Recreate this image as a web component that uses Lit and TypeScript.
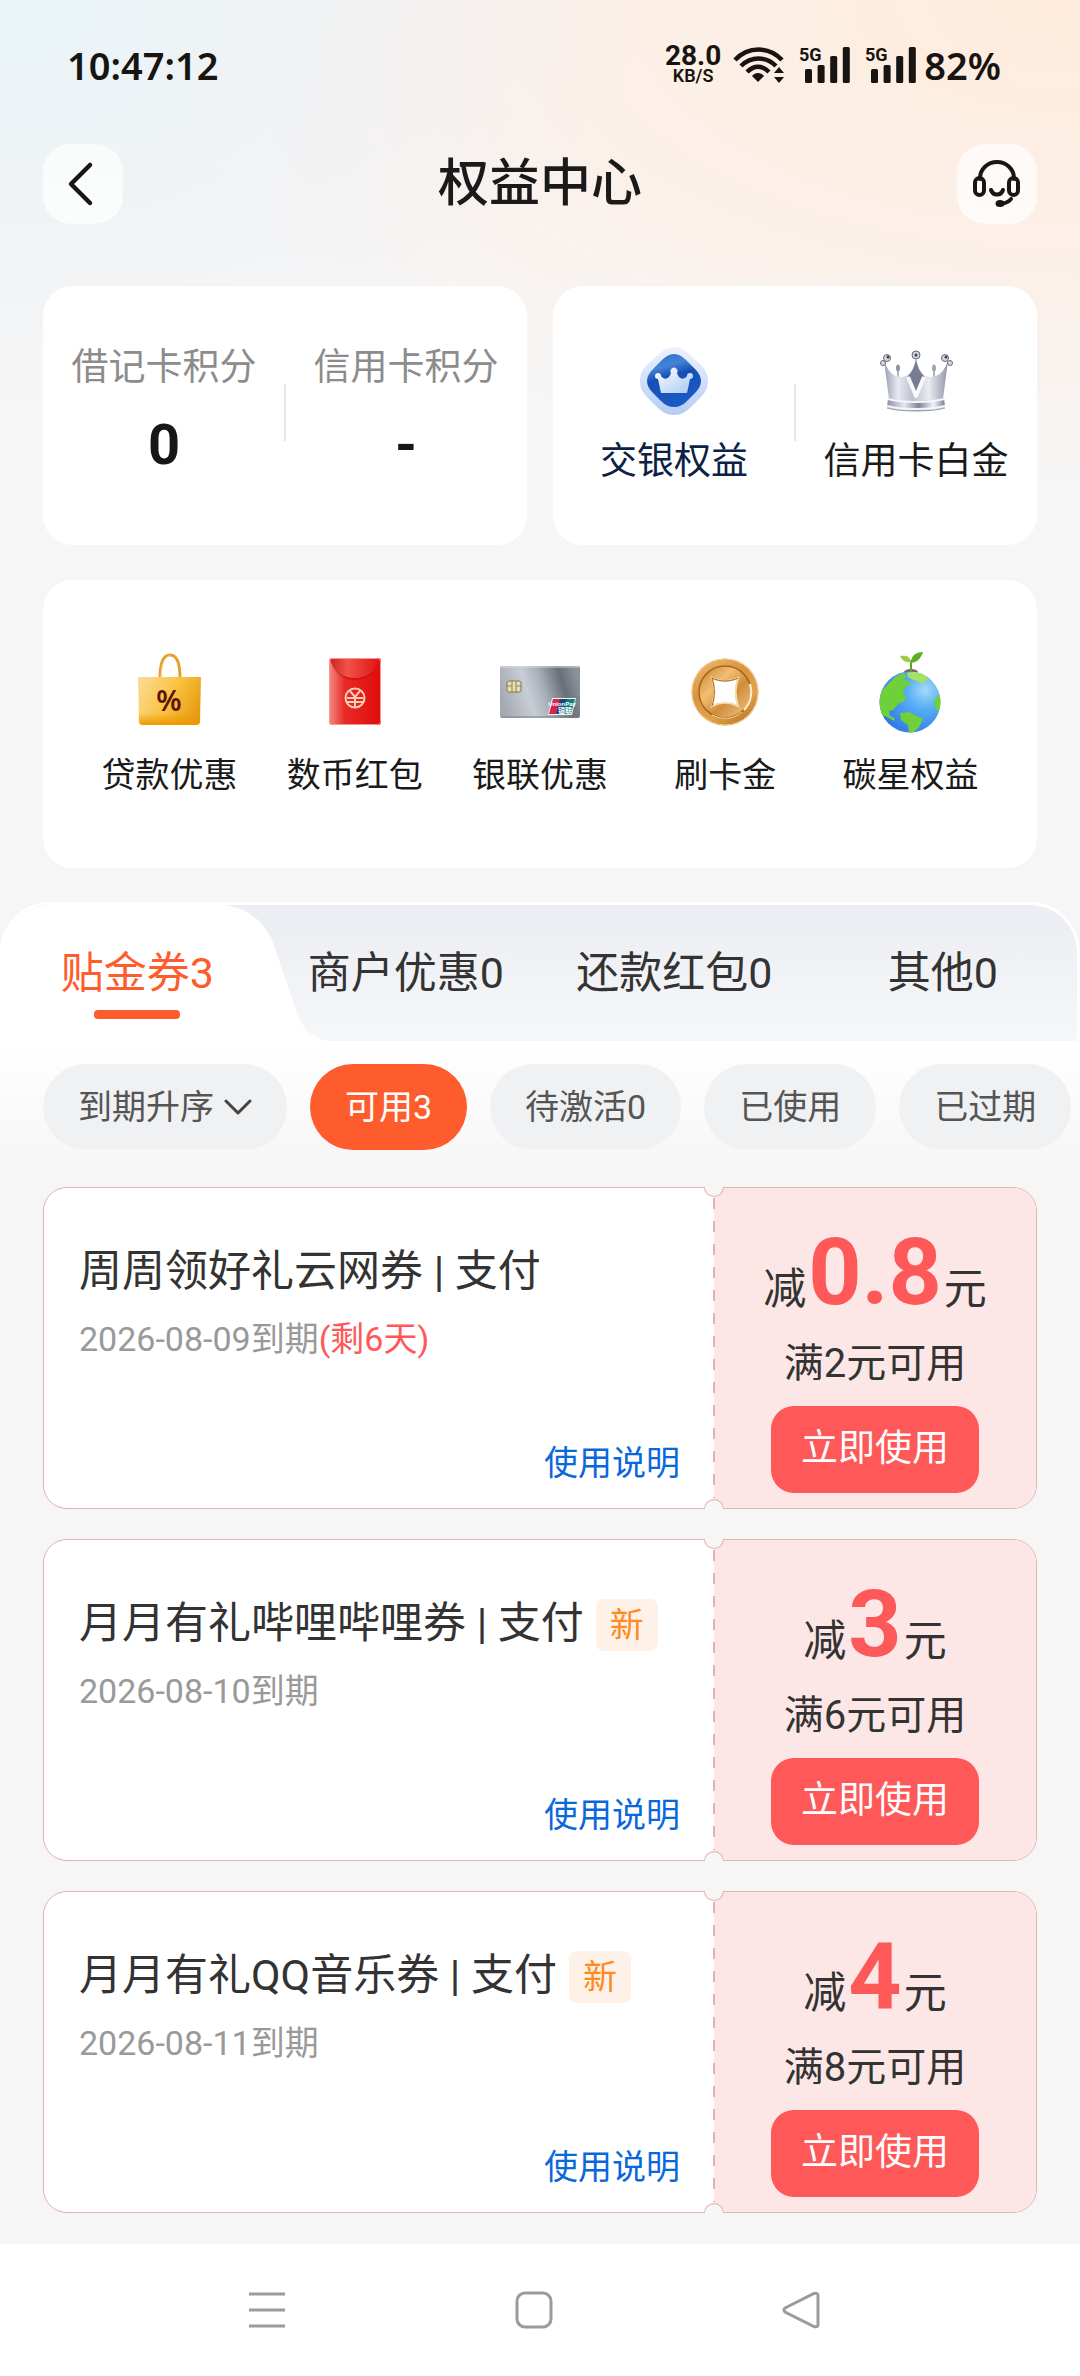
import { LitElement, html, css, svg, nothing } from "lit";
import { customElement, property, state } from "lit/decorators.js";
import { classMap } from "lit/directives/class-map.js";

interface Coupon {
  title: string;
  expires: string;
  remaining?: string;
  isNew?: boolean;
  amount: string;
  threshold: string;
}

const TABS = [
  { name: "贴金券", count: 3 },
  { name: "商户优惠", count: 0 },
  { name: "还款红包", count: 0 },
  { name: "其他", count: 0 },
];

const FILTERS = ["可用3", "待激活0", "已使用", "已过期"];

const COUPONS: Coupon[] = [
  {
    title: "周周领好礼云网券 | 支付",
    expires: "2026-08-09到期",
    remaining: "(剩6天)",
    amount: "0.8",
    threshold: "满2元可用",
  },
  {
    title: "月月有礼哔哩哔哩券 | 支付",
    expires: "2026-08-10到期",
    isNew: true,
    amount: "3",
    threshold: "满6元可用",
  },
  {
    title: "月月有礼QQ音乐券 | 支付",
    expires: "2026-08-11到期",
    isNew: true,
    amount: "4",
    threshold: "满8元可用",
  },
];

const bankIcon = html`
  <svg class="icon" viewBox="0 0 82 82" aria-hidden="true">
    <defs>
      <linearGradient id="bank-rim" x1="0" y1="0" x2="0" y2="1">
        <stop offset="0" stop-color="#edf3fd" />
        <stop offset="1" stop-color="#b4ccf5" />
      </linearGradient>
      <linearGradient id="bank-core" x1="0" y1="0" x2="0.3" y2="1">
        <stop offset="0" stop-color="#2b6cc8" />
        <stop offset="0.3" stop-color="#4683d6" />
        <stop offset="0.5" stop-color="#1550b4" />
        <stop offset="1" stop-color="#1a5ac4" />
      </linearGradient>
      <linearGradient id="bank-crown" x1="0" y1="0" x2="1" y2="1">
        <stop offset="0" stop-color="#ffffff" />
        <stop offset="1" stop-color="#a9c8f2" />
      </linearGradient>
    </defs>
    <path
      d="M41 7c7 0 12 4 17 9l10 9c5 5 7 10 7 16s-2 11-7 16l-10 10c-5 5-10 8-17 8s-12-3-17-8L14 57c-5-5-7-10-7-16s2-11 7-16l10-9c5-5 10-9 17-9z"
      fill="url(#bank-rim)"
    />
    <path
      d="M41 14c5 0 9 3 13 7l8 8c4 4 6 8 6 12s-2 8-6 12l-8 8c-4 4-8 6-13 6s-9-2-13-6l-8-8c-4-4-6-8-6-12s2-8 6-12l8-8c4-4 8-7 13-7z"
      fill="url(#bank-core)"
    />
    <path
      d="M28 53l-3-14a3 3 0 1 1 3-3c3 4 8 4 10-3a3.500 3.500 0 1 1 6 0c2 7 7 7 10 3a3 3 0 1 1 3 3l-3 14z"
      fill="url(#bank-crown)"
    />
  </svg>
`;

const crownIcon = html`
  <svg class="icon" viewBox="0 0 82 82" aria-hidden="true">
    <defs>
      <linearGradient id="silver" x1="0" y1="0" x2="1" y2="0">
        <stop offset="0" stop-color="#9a9eb0" />
        <stop offset="0.22" stop-color="#e8eaf0" />
        <stop offset="0.45" stop-color="#bcc0cd" />
        <stop offset="0.7" stop-color="#eaecf1" />
        <stop offset="1" stop-color="#9296a8" />
      </linearGradient>
      <linearGradient id="silver-band" x1="0" y1="0" x2="1" y2="0">
        <stop offset="0" stop-color="#8c90a6" />
        <stop offset="0.3" stop-color="#e4e6ee" />
        <stop offset="0.55" stop-color="#7f8399" />
        <stop offset="0.8" stop-color="#f2f3f7" />
        <stop offset="1" stop-color="#7c8096" />
      </linearGradient>
    </defs>
    <path d="M23 28v9M59 28v9" stroke="#b3b6c4" stroke-width="2" />
    <ellipse cx="23" cy="28" rx="2" ry="3.500" fill="#8f93a6" />
    <ellipse cx="59" cy="28" rx="2" ry="3.500" fill="#a2a5b5" />
    <path
      d="M9 21c4 10 8 15 17 16 8 0 12-6 15-18 3 12 7 18 15 18 9-1 13-6 17-16l-5 38c-14 5-40 5-54 0z"
      fill="url(#silver)"
    />
    <path d="M41 18c1 9 4 14 8 18l-8 17-8-17c4-4 7-9 8-18z" fill="#777b93" />
    <path
      d="M33 37l8 19 8-19"
      fill="none"
      stroke="#f7f8fb"
      stroke-width="4"
      stroke-linejoin="round"
    />
    <path
      d="M13 58c14 4 42 4 56 0l1 9c-14 5-44 5-58 0z"
      fill="url(#silver-band)"
    />
    <path
      d="M13 59c14 4 42 4 56 0M12 66c14 4 44 4 58 0"
      fill="none"
      stroke="#f5f6fa"
      stroke-width="2"
    />
    <path d="M12 68c14 4 44 4 58 0" fill="none" stroke="#9599ac" stroke-width="1" />
    <g fill="#d3d6e0" stroke="#666a80" stroke-width="1">
      <circle cx="8" cy="23" r="2.500" />
      <circle cx="75" cy="23" r="2.500" />
      <circle cx="41" cy="15" r="4" />
      <circle cx="12" cy="18" r="3.500" />
      <circle cx="70" cy="18" r="3.500" />
    </g>
    <g fill="#3a3e52">
      <circle cx="41" cy="15" r="1.500" />
      <circle cx="13" cy="17" r="1.500" />
      <circle cx="71" cy="17" r="1.500" />
    </g>
  </svg>
`;

const bagIcon = html`
  <svg class="icon" viewBox="0 0 82 82" aria-hidden="true">
    <defs>
      <linearGradient id="bag" x1="0" y1="0.300" x2="1" y2="0.700">
        <stop offset="0" stop-color="#fbd98a" />
        <stop offset="0.5" stop-color="#f9c23f" />
        <stop offset="1" stop-color="#e59a10" />
      </linearGradient>
      <linearGradient id="bag-foot" x1="0" y1="0" x2="0" y2="1">
        <stop offset="0.75" stop-color="#ee9a00" stop-opacity="0" />
        <stop offset="1" stop-color="#ee9a00" />
      </linearGradient>
    </defs>
    <path
      d="M31 27c0-16 4-23 10-23s10 7 10 23"
      fill="none"
      stroke="#e5a02c"
      stroke-width="3"
    />
    <path d="M32 27c0-14 4-22 9-22" fill="none" stroke="#f8d58c" stroke-width="1" />
    <path d="M9 26h63l-1 44a4 4 0 0 1-4 4H14a4 4 0 0 1-4-4z" fill="url(#bag)" />
    <path d="M9 26h63l-1 44a4 4 0 0 1-4 4H14a4 4 0 0 1-4-4z" fill="url(#bag-foot)" />
    <text x="40" y="60" text-anchor="middle" class="percent">%</text>
  </svg>
`;

const packetIcon = html`
  <svg class="icon" viewBox="0 0 82 82" aria-hidden="true">
    <defs>
      <linearGradient id="packet" x1="0" y1="0" x2="1" y2="0">
        <stop offset="0" stop-color="#f58c84" />
        <stop offset="0.3" stop-color="#e82a26" />
        <stop offset="1" stop-color="#e00c0c" />
      </linearGradient>
      <linearGradient id="flap" x1="0" y1="0" x2="1" y2="0">
        <stop offset="0" stop-color="#cc2420" />
        <stop offset="0.35" stop-color="#f0524a" />
        <stop offset="1" stop-color="#e01212" />
      </linearGradient>
    </defs>
    <rect x="15" y="7" width="52" height="67" rx="3" fill="url(#packet)" />
    <path d="M16 8h50c-3 14-13 21-25 21S19 22 16 8z" fill="#a90d0d" opacity="0.4" />
    <path d="M16 8h50c-3 12-13 19-25 19S19 20 16 8z" fill="url(#flap)" />
    <rect x="15.500" y="7.500" width="51" height="66" rx="3" fill="none" stroke="#f49a94" />
    <g fill="none" stroke="#f8cdb4" stroke-width="2">
      <circle cx="41" cy="47" r="9.500" />
      <path d="M36 40l5 6 5-6M41 46v10M33 47h16M33 51h16" />
    </g>
  </svg>
`;

const cardIcon = html`
  <svg class="icon" viewBox="0 0 82 82" aria-hidden="true">
    <defs>
      <linearGradient id="plate" x1="0" y1="0.600" x2="1" y2="0.400">
        <stop offset="0" stop-color="#a4a9b1" />
        <stop offset="0.35" stop-color="#c9ced6" />
        <stop offset="0.55" stop-color="#a9afb8" />
        <stop offset="0.8" stop-color="#686f79" />
        <stop offset="1" stop-color="#8b9199" />
      </linearGradient>
    </defs>
    <rect x="1" y="15" width="80" height="52" rx="2" fill="url(#plate)" />
    <path d="M2 16h78" stroke="#d5d9de" />
    <path d="M2 66h78" stroke="#7b818a" />
    <rect x="8" y="30" width="14" height="11" rx="2" fill="#e9dfae" stroke="#7d755a" />
    <path d="M13 30v11M17 30v11M8 35h5M17 35h5" stroke="#8a8265" fill="none" />
    <path d="M53 47h24l-4 17H49z" fill="#f1f3f5" />
    <path d="M54 48h8l-4 15h-8z" fill="#d7264c" />
    <path d="M61 48h8l-4 15h-8z" fill="#16467c" />
    <path d="M68 48h8l-4 15h-8z" fill="#0c7f80" />
    <text x="63" y="55" text-anchor="middle" class="union">UnionPay</text>
    <text x="66" y="62" text-anchor="middle" class="union union-cn">银联</text>
  </svg>
`;

const coinIcon = html`
  <svg class="icon" viewBox="0 0 82 82" aria-hidden="true">
    <defs>
      <linearGradient id="coin" x1="0.200" y1="0" x2="0.800" y2="1">
        <stop offset="0" stop-color="#eeb76a" />
        <stop offset="0.35" stop-color="#d9943f" />
        <stop offset="0.7" stop-color="#e2a24c" />
        <stop offset="1" stop-color="#b87524" />
      </linearGradient>
      <linearGradient id="coin-face" x1="0" y1="0" x2="1" y2="1">
        <stop offset="0" stop-color="#c47f30" />
        <stop offset="0.35" stop-color="#f3bd72" />
        <stop offset="0.6" stop-color="#d18d3e" />
        <stop offset="1" stop-color="#f5c981" />
      </linearGradient>
    </defs>
    <circle cx="41" cy="41" r="33.500" fill="url(#coin)" />
    <circle cx="41" cy="41" r="33" fill="none" stroke="#f4cf93" stroke-width="1" />
    <circle cx="41" cy="41" r="26" fill="url(#coin-face)" stroke="#a8661c" stroke-width="1.500" />
    <path d="M60 59a26 26 0 0 0 6-26" fill="none" stroke="#fff0d0" stroke-width="2" />
    <path d="M28 64a26 26 0 0 0 30-3" fill="none" stroke="#fbe0b0" stroke-width="1" />
    <path
      d="M28 27c8 4 18 4 26 0-3 9-3 19 0 28-8-4-18-4-26 0 3-9 3-19 0-28z"
      fill="#ffffff"
      stroke="#f7dcaa"
      stroke-width="2"
    />
    <path d="M28 27c8 4 18 4 26 0M28 27c3 9 3 19 0 28" fill="none" stroke="#a8661c" />
  </svg>
`;

const globeIcon = html`
  <svg class="icon" viewBox="0 0 82 82" aria-hidden="true">
    <defs>
      <radialGradient id="sea" cx="0.750" cy="0.300" r="0.900">
        <stop offset="0" stop-color="#a5daf8" />
        <stop offset="0.35" stop-color="#55adf5" />
        <stop offset="1" stop-color="#2a6fe4" />
      </radialGradient>
      <clipPath id="ball"><circle cx="41" cy="51" r="30.500" /></clipPath>
    </defs>
    <ellipse cx="42" cy="21" rx="7" ry="3" fill="#8a5a4c" />
    <circle cx="41" cy="51" r="30.500" fill="url(#sea)" />
    <g clip-path="url(#ball)" fill="#6fd03a">
      <path
        d="M26 26l8-4 4 3-4 4 6 1 2 5-4-1-3 4-1 4 3 4-2 5-5 1-6 7-4 1 1 5 5 2-1 3-7-4-8-3-1-12 4-12z"
      />
      <path d="M38 22l10-2 9 4 2 4-6 5-4-3-5-1-5-3z" fill="#a6e066" />
      <path d="M31 62l9-1 14 7-4 8-7 7-3-1-1-8-7-5z" />
      <path d="M72 43l-6 4-1 7 3 6 6-4z" />
    </g>
    <path d="M42 20V9" stroke="#5fa02c" stroke-width="2" fill="none" />
    <path d="M42 11c-6 1-9-2-11-6 6-1 10 0 11 6z" fill="#9ccc3f" />
    <path d="M42 12c0-7 4-11 12-11-2 6-5 10-12 11z" fill="#5fae28" />
  </svg>
`;

const SERVICES = [
  { label: "贷款优惠", icon: bagIcon },
  { label: "数币红包", icon: packetIcon },
  { label: "银联优惠", icon: cardIcon },
  { label: "刷卡金", icon: coinIcon },
  { label: "碳星权益", icon: globeIcon },
];

@customElement("coupon-card")
export class CouponCard extends LitElement {
  @property({ attribute: false }) coupon!: Coupon;

  static styles = css`
    :host {
      display: block;
    }

    .coupon {
      display: flex;
      position: relative;
      border: 1px solid #e6b0b0;
      border-radius: 24px;
      background: #ffffff;
    }

    .info {
      flex: 1;
      display: flex;
      flex-direction: column;
      padding: 53px 34px 21px 35px;
    }

    .heading {
      display: flex;
      align-items: center;
      gap: 12px;
      height: 60px;
    }

    h2 {
      margin: 0;
      font-size: 43px;
      font-weight: 400;
      line-height: 60px;
      color: #333333;
      white-space: nowrap;
    }

    .tag {
      padding: 2px 14px;
      margin-top: 4px;
      border-radius: 8px;
      background: #fef1e8;
      color: #ff8a1f;
      font-size: 34px;
      line-height: 48px;
    }

    .date {
      margin: 14px 0 0;
      font-size: 34px;
      line-height: 48px;
      color: #999999;
    }

    .remaining {
      color: #fe5858;
    }

    a {
      align-self: flex-end;
      margin-top: 76px;
      font-size: 34px;
      line-height: 48px;
      color: #0a68dc;
      text-decoration: none;
    }

    .offer {
      position: relative;
      flex: 0 0 322px;
      display: flex;
      flex-direction: column;
      align-items: center;
      padding: 38px 0 15px;
      border-radius: 0 23px 23px 0;
      background: #fde6e6;
      color: #333333;
    }

    /* Perforation between the two halves */
    .offer::before {
      content: "";
      position: absolute;
      top: 10px;
      bottom: 10px;
      left: -1px;
      width: 2px;
      background: repeating-linear-gradient(
        to bottom,
        #e6b0b0 0 11px,
        transparent 11px 23px
      );
    }

    .notch {
      position: absolute;
      left: -10px;
      box-sizing: border-box;
      width: 20px;
      height: 10px;
      border: 1px solid #e6b0b0;
      background: #f7f7f7;
    }

    .notch.top {
      top: -1px;
      border-top: none;
      border-radius: 0 0 10px 10px;
    }

    .notch.bottom {
      bottom: -1px;
      border-bottom: none;
      border-radius: 10px 10px 0 0;
    }

    .amount {
      display: flex;
      align-items: baseline;
      gap: 2px;
      font-size: 43px;
      line-height: 60px;
    }

    .amount strong {
      font-size: 93px;
      font-weight: 700;
      line-height: 94px;
      color: #fe5858;
    }

    .threshold {
      margin-top: 16px;
      font-size: 40px;
      line-height: 56px;
    }

    button {
      margin-top: 14px;
      padding: 17px 30px 18px;
      border: none;
      border-radius: 23px;
      background: #fe5858;
      color: #ffffff;
      font-family: inherit;
      font-size: 37px;
      line-height: 52px;
      cursor: pointer;
    }
  `;

  render() {
    const { title, expires, remaining, isNew, amount, threshold } = this.coupon;
    return html`
      <article class="coupon">
        <div class="info">
          <div class="heading">
            <h2>${title}</h2>
            ${isNew ? html`<span class="tag">新</span>` : nothing}
          </div>
          <p class="date">
            ${expires}${remaining
              ? html`<span class="remaining">${remaining}</span>`
              : nothing}
          </p>
          <a href="#usage">使用说明</a>
        </div>
        <div class="offer">
          <span class="notch top"></span>
          <span class="notch bottom"></span>
          <div class="amount">
            <span>减</span><strong>${amount}</strong><span>元</span>
          </div>
          <div class="threshold">${threshold}</div>
          <button type="button">立即使用</button>
        </div>
      </article>
    `;
  }
}

@customElement("app-root")
export class AppRoot extends LitElement {
  @state() private activeTab = 0;
  @state() private activeFilter = 0;

  static styles = css`
    :host {
      display: flex;
      flex-direction: column;
      min-height: 100vh;
      background: #f6f6f6;
      color: #1a1a1a;
      font-family: Roboto, "Noto Sans CJK SC", sans-serif;
    }

    button,
    select {
      border: none;
      background: none;
      padding: 0;
      font-family: inherit;
      color: inherit;
      cursor: pointer;
    }

    a {
      color: inherit;
      text-decoration: none;
    }

    .top {
      background:
        radial-gradient(ellipse 640px 400px at 0 0, #e9f4f7, rgba(236, 240, 245, 0.5) 60%, transparent),
        radial-gradient(ellipse 960px 480px at 100% 0, #ffecdc, rgba(253, 238, 229, 0.7) 60%, transparent);
      padding: 46px 43px 0;
    }

    .status {
      display: flex;
      align-items: center;
      justify-content: space-between;
      height: 38px;
      padding: 0 36px 0 24px;
      font-family: "Noto Sans", sans-serif;
      font-weight: 600;
      font-size: 38px;
      line-height: 38px;
      color: #171412;
    }

    .indicators {
      display: flex;
      align-items: center;
    }

    .speed {
      display: flex;
      flex-direction: column;
      align-items: center;
      margin-right: 12px;
      font-family: Roboto, sans-serif;
      font-size: 28px;
      font-weight: 700;
      line-height: 21px;
    }

    .speed small {
      font-size: 18px;
      font-weight: 600;
      line-height: 19px;
    }

    .wifi {
      width: 52px;
      height: 38px;
      margin-right: 14px;
    }

    .signal {
      width: 52px;
      height: 38px;
      margin-right: 14px;
      overflow: visible;
    }

    .signal:last-of-type {
      margin-right: 7px;
    }

    .signal text {
      font: 700 18px Roboto, sans-serif;
    }

    .header {
      display: flex;
      align-items: center;
      justify-content: space-between;
      margin-top: 60px;
    }

    h1 {
      margin: 0;
      font-size: 51px;
      font-weight: 500;
      line-height: 80px;
    }

    .round {
      width: 80px;
      height: 80px;
      border-radius: 28px;
      background: rgba(255, 255, 255, 0.7);
    }

    .round svg {
      display: block;
      width: 80px;
      height: 80px;
    }

    .summary {
      display: grid;
      grid-template-columns: 1fr 1fr;
      gap: 26px;
      margin-top: 62px;
    }

    .panel {
      display: flex;
      border-radius: 30px;
      background: #ffffff;
    }

    .cell {
      position: relative;
      flex: 1;
      display: flex;
      flex-direction: column;
      align-items: center;
      padding: 54px 0 57px;
      font-size: 37px;
      line-height: 52px;
      white-space: nowrap;
    }

    .cell + .cell::before {
      content: "";
      position: absolute;
      left: -1px;
      top: 98px;
      width: 2px;
      height: 57px;
      background: #e8e8e8;
    }

    .cell .label {
      margin-top: 2px;
      color: #8c8c8c;
    }

    .cell .value {
      margin-top: 16px;
      font-size: 56px;
      font-weight: 700;
      line-height: 70px;
      color: #171717;
    }

    .cell .name {
      margin-top: 14px;
    }

    .cell .name.bank {
      color: #0b2245;
    }

    .icon {
      width: 82px;
      height: 82px;
    }

    .percent {
      font: 600 29px "Noto Sans", sans-serif;
      fill: #5c1408;
    }

    .union {
      font: 700 6px "Liberation Sans", sans-serif;
      fill: #ffffff;
    }

    .union-cn {
      font: 700 7px "Noto Sans CJK SC", sans-serif;
    }

    .services {
      margin: 35px 43px 0;
      padding: 71px 34px 69px;
    }

    .service {
      flex: 1;
      display: flex;
      flex-direction: column;
      align-items: center;
      gap: 18px;
      font-size: 34px;
      line-height: 48px;
      white-space: nowrap;
    }

    .wallet {
      flex: 1;
      margin-top: 34px;
    }

    .tabs {
      display: flex;
      border: 3px solid #ffffff;
      border-bottom: none;
      border-radius: 50px 50px 0 0;
      background: linear-gradient(#eaedf2, #f0f1f4 40%, #f6f7f9) padding-box;
    }

    .tab {
      position: relative;
      flex: 1 1 0;
      display: flex;
      flex-direction: column;
      align-items: center;
      gap: 7px;
      padding: 38px 0 22px;
      font-size: 43px;
      line-height: 60px;
      color: #333333;
      white-space: nowrap;
    }

    .tab::after {
      content: "";
      width: 86px;
      height: 9px;
      border-radius: 4px;
    }

    .tab.active {
      color: #ff5c2e;
    }

    .tab.active::after {
      background: #ff5c2e;
      z-index: 1;
    }

    .tab span {
      position: relative;
      z-index: 1;
    }

    .tab svg {
      position: absolute;
      left: -3px;
      top: 0;
      width: 334px;
      height: 100%;
    }

    .filters {
      display: flex;
      gap: 23px;
      padding: 23px 0 37px 43px;
      background: linear-gradient(#ffffff, #f6f6f6 90%);
      overflow: hidden;
    }

    .pill {
      flex: none;
      display: flex;
      align-items: center;
      height: 86px;
      padding: 0 35px;
      border-radius: 43px;
      background: #f0f1f3;
      color: #555555;
      font-size: 34px;
      line-height: 48px;
      white-space: nowrap;
    }

    .pill.active {
      background: #ff5c2e;
      color: #ffffff;
    }

    .pill select {
      appearance: none;
      font-size: 34px;
      line-height: 48px;
    }

    .pill svg {
      width: 30px;
      height: 30px;
      margin-left: 8px;
      pointer-events: none;
    }

    .coupons {
      display: flex;
      flex-direction: column;
      gap: 30px;
      padding: 0 43px 31px;
    }

    .system {
      display: grid;
      grid-template-columns: repeat(3, 1fr);
      justify-items: center;
      align-items: center;
      height: 132px;
      padding: 0 146px 0 133px;
      background: #ffffff;
    }

    .system button {
      height: 40px;
    }

    .system svg {
      display: block;
      width: 40px;
      height: 40px;
      fill: none;
      stroke: #9b9b9b;
      stroke-width: 3;
    }
  `;

  private selectTab(index: number) {
    this.activeTab = index;
  }

  private selectFilter(index: number) {
    this.activeFilter = index;
  }

  private renderSignal() {
    const tops = [23, 19, 10, 1];
    return html`
      <svg class="signal" viewBox="0 0 52 38" fill="currentColor" aria-hidden="true">
        <text x="0" y="15">5G</text>
        ${tops.map(
          (top, i) => svg`
            <rect x=${6 + i * 12.600} y=${top} width="7" height=${37 - top} rx="1.500" />
          `,
        )}
      </svg>
    `;
  }

  private renderStatus() {
    return html`
      <div class="status">
        <span>10:47:12</span>
        <div class="indicators">
          <span class="speed">28.0<small>KB/S</small></span>
          <svg
            class="wifi"
            viewBox="0 0 52 38"
            fill="none"
            stroke="currentColor"
            stroke-width="4.500"
            aria-hidden="true"
          >
            <path d="M2 14c13-14 34-14 47 0" />
            <path d="M8 20c10-10 25-10 35 0" />
            <path d="M14 26c7-7 15-7 22 0" />
            <path d="M25 36l-6-6c3-4 9-4 12 0z" fill="currentColor" stroke="none" />
            <path
              d="M41 27l5-6 5 6zM41 31l5 6 5-6z"
              fill="currentColor"
              stroke="none"
            />
          </svg>
          ${this.renderSignal()} ${this.renderSignal()}
          <span>82%</span>
        </div>
      </div>
    `;
  }

  private renderHeader() {
    return html`
      <header class="header">
        <button type="button" class="round" aria-label="返回">
          <svg
            viewBox="0 0 80 80"
            fill="none"
            stroke="#171717"
            stroke-width="4.500"
            stroke-linecap="round"
            stroke-linejoin="round"
          >
            <path d="M47 21L28 40l19 19" />
          </svg>
        </button>
        <h1>权益中心</h1>
        <button type="button" class="round" aria-label="客服">
          <svg
            viewBox="0 0 80 80"
            fill="none"
            stroke="#171717"
            stroke-width="4"
            stroke-linecap="round"
          >
            <path d="M23 35v-1a17 16 0 0 1 34 0v1" />
            <rect x="18" y="34" width="9" height="17" rx="4.500" />
            <rect x="52" y="34" width="9" height="17" rx="4.500" />
            <path d="M34 46c2 6 10 6 12 0" />
            <path d="M54 55c-2 3-5 4-9 4.500" />
            <ellipse cx="43" cy="59.500" rx="2.500" ry="1.500" fill="#171717" />
          </svg>
        </button>
      </header>
    `;
  }

  private renderSummary() {
    return html`
      <section class="summary">
        <div class="panel">
          <div class="cell">
            <span class="label">借记卡积分</span>
            <span class="value">0</span>
          </div>
          <div class="cell">
            <span class="label">信用卡积分</span>
            <span class="value">-</span>
          </div>
        </div>
        <div class="panel">
          <a class="cell" href="#bank">${bankIcon}<span class="name bank">交银权益</span></a>
          <a class="cell" href="#platinum">${crownIcon}<span class="name">信用卡白金</span></a>
        </div>
      </section>
    `;
  }

  private renderTabs() {
    return html`
      <div class="tabs" role="tablist">
        ${TABS.map((tab, i) => {
          const active = i === this.activeTab;
          return html`
            <button
              type="button"
              role="tab"
              aria-selected=${active}
              class=${classMap({ tab: true, active })}
              @click=${() => this.selectTab(i)}
            >
              ${active
                ? html`
                    <svg viewBox="0 0 334 136" preserveAspectRatio="none" aria-hidden="true">
                      <path
                        d="M0 136V48C6 18 24 0 54 0h165c28 0 48 18 56 43l20 60c6 20 18 33 38 33z"
                        fill="#ffffff"
                      />
                    </svg>
                  `
                : nothing}
              <span>${tab.name}${tab.count}</span>
            </button>
          `;
        })}
      </div>
    `;
  }

  private renderFilters() {
    return html`
      <div class="filters">
        <label class="pill">
          <select aria-label="排序">
            <option>到期升序</option>
            <option>到期降序</option>
          </select>
          <svg
            viewBox="0 0 30 30"
            fill="none"
            stroke="#444444"
            stroke-width="3"
            stroke-linecap="round"
            stroke-linejoin="round"
            aria-hidden="true"
          >
            <path d="M4 9l12 12L28 9" />
          </svg>
        </label>
        ${FILTERS.map(
          (name, i) => html`
            <button
              type="button"
              class=${classMap({ pill: true, active: i === this.activeFilter })}
              @click=${() => this.selectFilter(i)}
            >
              ${name}
            </button>
          `,
        )}
      </div>
    `;
  }

  private renderSystemBar() {
    return html`
      <nav class="system">
        <button type="button" aria-label="最近任务">
          <svg viewBox="0 0 40 40"><path d="M2 4h36M2 20h36M2 36h36" /></svg>
        </button>
        <button type="button" aria-label="主屏幕">
          <svg viewBox="0 0 40 40"><rect x="3" y="3" width="34" height="34" rx="8" /></svg>
        </button>
        <button type="button" aria-label="后退">
          <svg viewBox="0 0 40 40">
            <path d="M4 18L33 3.500q4-1 4 2v29q0 3-4 2L4 22q-2-2 0-4z" />
          </svg>
        </button>
      </nav>
    `;
  }

  render() {
    return html`
      <div class="top">
        ${this.renderStatus()} ${this.renderHeader()} ${this.renderSummary()}
      </div>
      <section class="panel services">
        ${SERVICES.map(
          (item) => html`
            <a class="service" href="#service">${item.icon}<span>${item.label}</span></a>
          `,
        )}
      </section>
      <section class="wallet">
        ${this.renderTabs()} ${this.renderFilters()}
        <div class="coupons">
          ${COUPONS.map(
            (coupon) => html`<coupon-card .coupon=${coupon}></coupon-card>`,
          )}
        </div>
      </section>
      ${this.renderSystemBar()}
    `;
  }
}

declare global {
  interface HTMLElementTagNameMap {
    "app-root": AppRoot;
    "coupon-card": CouponCard;
  }
}
